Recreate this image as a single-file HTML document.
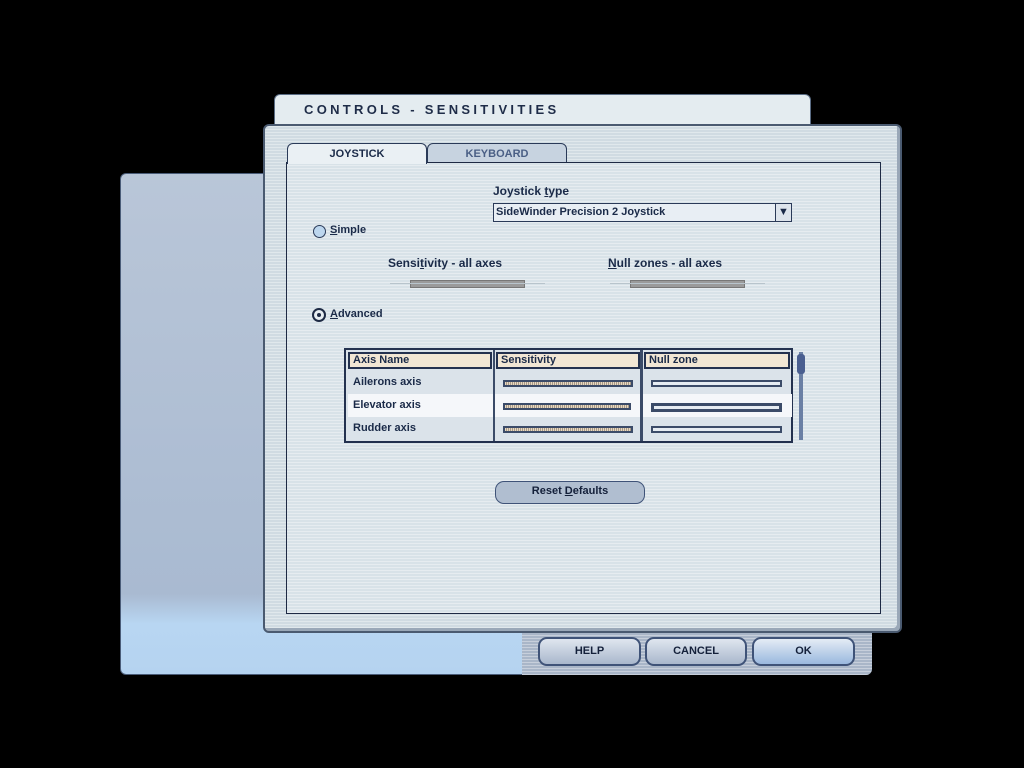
<!DOCTYPE html>
<html><head><style>
*{margin:0;padding:0;box-sizing:border-box}
body{width:1024px;height:768px;background:#000;position:relative;overflow:hidden;font-family:"Liberation Sans",sans-serif;font-weight:bold;color:#1a2a48}
.abs{position:absolute}
.stripe{background-image:repeating-linear-gradient(0deg,rgba(255,255,255,.35) 0 1px,rgba(0,0,0,0) 1px 3px)}
.btn{position:absolute;border:2px solid #3f5378;border-radius:9px;background:linear-gradient(#dfe6ef,#a9b7cc);font-size:11px;text-align:center;line-height:24px;color:#14203a}
.bar{position:absolute;height:7px;border:2px solid #3b4b68;background:repeating-linear-gradient(90deg,#e8d8c0 0 1px,#a89a88 1px 2px)}
.nbar{position:absolute;height:7px;border:2px solid #3b4b68;background:#e6ecf2}
.hdr{position:absolute;top:2px;height:17px;background:#f1e6d4;border:2px solid #23314f;font-size:11px;line-height:13px;padding-left:3px}
.row{position:absolute;left:2px;width:444px;height:23px;font-size:11px;line-height:23px;padding-left:5px}
.gs{position:absolute;height:8px;background:#9a9a9a;border:1px solid #777}
</style></head><body>
<div class="abs stripe" style="left:120px;top:173px;width:752px;height:502px;border-radius:6px;border:1px solid #4a5c78;background-color:#aebfd6;background:linear-gradient(#b9c6d8 0,#a9bad1 420px,#b8d6f2 450px,#b5d3f0 100%)"></div>
<div class="abs stripe" style="left:522px;top:620px;width:350px;height:55px;background-color:#a9b6c8;border-radius:0 0 6px 0"></div>
<div class="abs" style="left:274px;top:94px;width:537px;height:34px;background:#e4ecf0;border:1px solid #5a6c84;border-radius:6px 6px 0 0;font-size:13px;letter-spacing:3.3px;padding:7px 0 0 29px;color:#1e2c48">CONTROLS - SENSITIVITIES</div>
<div class="abs stripe" style="left:263px;top:124px;width:639px;height:509px;background-color:#d0dbe2;border-radius:6px;border:2px solid #4a5a70;box-shadow:inset -3px -3px 0 #9aa8b8"></div>
<div class="abs" style="left:427px;top:143px;width:140px;height:21px;background:#c7d3e0;border:1px solid #2a3a58;border-radius:6px 6px 0 0;font-size:11px;text-align:center;line-height:20px;color:#4a5f85">KEYBOARD</div>
<div class="abs stripe" style="left:286px;top:162px;width:595px;height:452px;border:1px solid #1e2a44;background-color:#d8e2e8"></div>
<div class="abs" style="left:287px;top:143px;width:140px;height:21px;background:#eaf0f4;border:1px solid #2a3a58;border-bottom:none;border-radius:6px 6px 0 0;font-size:11px;text-align:center;line-height:20px">JOYSTICK</div>
<div class="abs" style="left:493px;top:184px;font-size:12px">Joystick <u>t</u>ype</div>
<div class="abs" style="left:493px;top:203px;width:299px;height:19px;background:#e8eef4;border:1px solid #2a3a58;font-size:11px;line-height:17px;padding-left:2px">SideWinder Precision 2 Joystick</div>
<div class="abs" style="left:775px;top:204px;width:16px;height:17px;background:#dde4ec;border-left:1px solid #2a3a58;font-size:11px;text-align:center;line-height:17px">▼</div>
<div class="abs" style="left:313px;top:225px;width:13px;height:13px;border-radius:50%;border:1px solid #2a3a58;background:#bcd6ee"></div>
<div class="abs" style="left:330px;top:224px;font-size:11px"><u>S</u>imple</div>
<div class="abs" style="left:388px;top:256px;font-size:12px">Sensi<u>t</u>ivity - all axes</div>
<div class="abs" style="left:608px;top:256px;font-size:12px"><u>N</u>ull zones - all axes</div>
<div class="gs" style="left:410px;top:280px;width:115px"></div>
<div class="gs" style="left:630px;top:280px;width:115px"></div>
<div class="abs" style="left:390px;top:283px;width:155px;height:1px;background:#b8c4cc"></div>
<div class="abs" style="left:610px;top:283px;width:155px;height:1px;background:#b8c4cc"></div>
<div class="abs" style="left:312px;top:308px;width:14px;height:14px;border-radius:50%;border:2px solid #1e2a44;background:#e8eef2"></div>
<div class="abs" style="left:317px;top:313px;width:4px;height:4px;border-radius:50%;background:#1e2a44"></div>
<div class="abs" style="left:330px;top:308px;font-size:11px"><u>A</u>dvanced</div>
<div class="abs" style="left:344px;top:348px;width:449px;height:95px;border:2px solid #23314f;background:#dbe3ea">
 <div class="hdr" style="left:2px;width:144px">Axis Name</div>
 <div class="hdr" style="left:150px;width:144px">Sensitivity</div>
 <div class="hdr" style="left:298px;width:146px">Null zone</div>
 <div class="row" style="top:21px">Ailerons axis</div>
 <div class="row" style="top:44px;background:#f5f7fa">Elevator axis</div>
 <div class="row" style="top:67px">Rudder axis</div>
 <div class="abs" style="left:147px;top:0;width:2px;height:91px;background:#3b4b68"></div>
 <div class="abs" style="left:294px;top:0;width:3px;height:91px;background:#3b4b68"></div>
 <div class="bar" style="left:157px;top:30px;width:130px"></div>
 <div class="bar" style="left:157px;top:53px;width:128px"></div>
 <div class="bar" style="left:157px;top:76px;width:130px"></div>
 <div class="nbar" style="left:305px;top:30px;width:131px"></div>
 <div class="nbar" style="left:305px;top:53px;width:131px;border-width:3px;height:9px"></div>
 <div class="nbar" style="left:305px;top:76px;width:131px"></div>
</div>
<div class="abs" style="left:799px;top:352px;width:4px;height:88px;background:#6a7fa4"></div>
<div class="abs" style="left:797px;top:354px;width:8px;height:20px;background:#4a5f90;border-radius:3px"></div>
<div class="btn" style="left:495px;top:481px;width:150px;height:23px;line-height:19px;border-width:1px;background:#b0bed0;font-size:11px">Reset <u>D</u>efaults</div>
<div class="btn" style="left:538px;top:637px;width:103px;height:29px">HELP</div>
<div class="btn" style="left:645px;top:637px;width:102px;height:29px">CANCEL</div>
<div class="btn" style="left:752px;top:637px;width:103px;height:29px;background:linear-gradient(#e4ecf5,#9ab8de)">OK</div>
</body></html>
